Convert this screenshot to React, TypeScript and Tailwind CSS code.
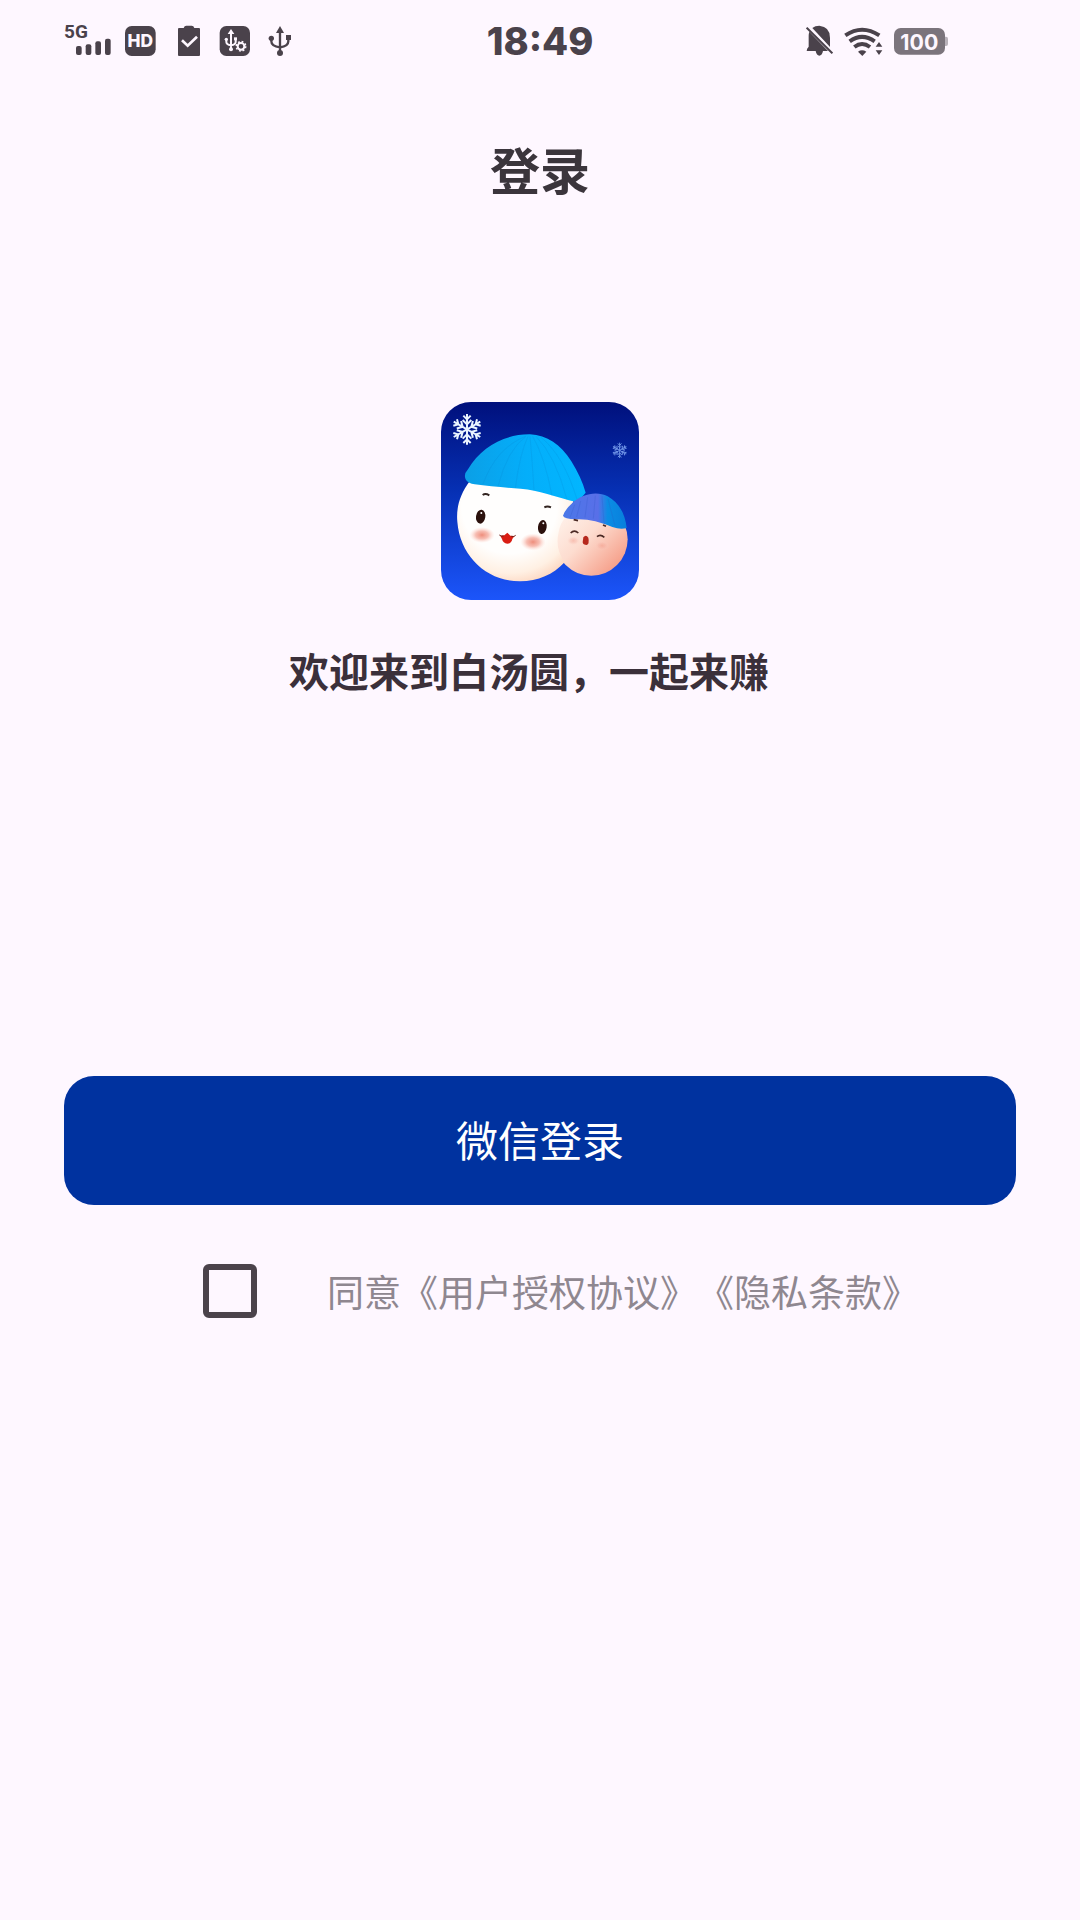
import { useState } from "react";

const cjk = "font-['Noto_Sans_CJK_SC',sans-serif] [text-spacing-trim:space-all]";

function SignalIcon() {
  return (
    <svg viewBox="42 27 141 126" className="h-[42px] w-[47px]" fill="currentColor" aria-label="5G">
      <text x="42" y="84" fontSize="57" fontWeight="700" fontFamily="Roboto, sans-serif">
        5G
      </text>
      <rect x="78" y="108" width="17" height="27" rx="6" />
      <rect x="107" y="103" width="17" height="32" rx="6" />
      <rect x="136" y="94" width="17" height="41" rx="6" />
      <rect x="165" y="86" width="17" height="49" rx="6" />
    </svg>
  );
}

function HdIcon() {
  return (
    <svg viewBox="219 36 105 108" className="h-9 w-[35px]" fill="currentColor" aria-label="HD">
      <rect x="225" y="48" width="92" height="90" rx="20" />
      <text
        x="271"
        y="112"
        textAnchor="middle"
        fontSize="52"
        fontWeight="800"
        fontFamily="Inter, sans-serif"
        fill="#fef7ff"
      >
        HD
      </text>
    </svg>
  );
}

function ClipboardIcon() {
  return (
    <svg viewBox="360 36 108 108" className="h-9 w-9" fill="currentColor" aria-hidden="true">
      <path d="M387 54h14q2-7 8-7h16q6 0 8 7h14q3 0 3 3v78q0 3-3 3h-60q-3 0-3-3V57q0-3 3-3z" />
      <path d="M396 91l17 16 28-27" fill="none" stroke="#fef7ff" strokeWidth="8" />
    </svg>
  );
}

function UsbGearIcon() {
  return (
    <svg viewBox="504 36 102 108" className="h-9 w-[34px]" fill="currentColor" aria-hidden="true">
      <rect x="509" y="48" width="91" height="90" rx="20" />
      <g fill="#fef7ff">
        <path d="M543 57l10 15h-20z" />
        <circle cx="543" cy="118" r="6" />
        <circle cx="529" cy="88" r="5" />
        <path d="M552 82h9v9h-9z" />
      </g>
      <path d="M543 68v48M529 88v8q0 8 14 10M557 88v8q0 8-14 10" fill="none" stroke="#fef7ff" strokeWidth="6" />
      <circle cx="573" cy="109" r="16" />
      <circle cx="573" cy="109" r="10" fill="none" stroke="#fef7ff" strokeWidth="6" />
      <circle cx="573" cy="109" r="14" fill="none" stroke="#fef7ff" strokeWidth="5" strokeDasharray="5.5 5.5" />
    </svg>
  );
}

function UsbIcon() {
  return (
    <svg viewBox="642 36 90 108" className="h-9 w-[30px]" fill="currentColor" aria-hidden="true">
      <path d="M690 48l12 21h-24z" />
      <circle cx="690" cy="129" r="9" />
      <circle cx="664" cy="85" r="8" />
      <path d="M708 75h15v15h-15z" />
      <path d="M690 64v62M664 86v8q0 15 26 18 25-3 25-18v-8" fill="none" stroke="currentColor" strokeWidth="7" />
    </svg>
  );
}

function BellOffIcon() {
  return (
    <svg viewBox="1008 36 81 108" className="h-9 w-[27px]" fill="currentColor" aria-hidden="true">
      <path d="M1027 54q8-7 21-7 32 3 32 36v28z" />
      <path d="M1018 65l56 58h-15q-3 14-11 14t-11-14h-27q0-8 6-13V78q0-7 2-13z" />
      <path d="M1013 47l77 80" stroke="#fef7ff" strokeWidth="5" />
      <path d="M1010 53l77 77" stroke="currentColor" strokeWidth="6" />
    </svg>
  );
}

function WifiIcon() {
  return (
    <svg viewBox="1122 36 117 108" className="h-9 w-[39px]" fill="currentColor" aria-hidden="true">
      <g fill="none" stroke="currentColor" strokeWidth="12">
        <path d="M1126 76q50-34 102 0" />
        <path d="M1139 94q37-27 75 0" />
        <path d="M1153 111q23-18 47 0" />
      </g>
      <path d="M1164 125q12-8 25 0l-12 13z" />
      <path d="M1227 96l10 14h-20zM1227 135l10-14h-20z" />
    </svg>
  );
}

function BatteryIcon() {
  return (
    <svg viewBox="1272 36 162 108" className="h-9 w-[54px]" aria-label="100">
      <path d="M1424 80h4q6 0 6 6v16q0 6-6 6h-4z" fill="#b9b2ba" />
      <rect x="1272" y="54" width="153" height="80" rx="20" fill="#7b747c" />
      <text
        x="1348"
        y="119"
        textAnchor="middle"
        fontSize="64"
        fontWeight="700"
        fontFamily="Inter, sans-serif"
        fill="#fef7ff"
      >
        100
      </text>
    </svg>
  );
}

function StatusBar() {
  return (
    <div className="grid h-20 grid-cols-3 items-center px-16 text-[#4a424b]">
      <div className="flex items-center gap-3">
        <SignalIcon />
        <HdIcon />
        <ClipboardIcon />
        <UsbGearIcon />
        <UsbIcon />
      </div>
      <time className="pt-0.5 text-center font-[Inter,sans-serif] text-[38px] leading-10 font-extrabold">18:49</time>
      <div className="flex items-center justify-end gap-[11px] pr-[68px]">
        <BellOffIcon />
        <WifiIcon />
        <BatteryIcon />
      </div>
    </div>
  );
}

const spokes = [0, 60, 120, 180, 240, 300];

function Snowflake() {
  return (
    <g fill="none" stroke="currentColor" strokeWidth="6">
      {spokes.map((deg) => (
        <path key={deg} transform={`rotate(${deg})`} d="M0 0v-46M-11-41l11 11 11-11M-13-28l13 13 13-13" />
      ))}
    </g>
  );
}

function AppLogo() {
  return (
    <svg viewBox="37 37 594 594" className="size-[198px] rounded-[30px]" role="img" aria-label="白汤圆">
      <defs>
        <linearGradient id="sky" x1="0" y1="0" x2="0" y2="1">
          <stop offset="0" stopColor="#00107c" />
          <stop offset="0.45" stopColor="#0630b4" />
          <stop offset="1" stopColor="#1c55fa" />
        </linearGradient>
        <radialGradient id="bigFace" cx="0.45" cy="0.35" r="0.68">
          <stop offset="0.6" stopColor="#fffefd" />
          <stop offset="0.85" stopColor="#fff0e3" />
          <stop offset="1" stopColor="#fdd9c4" />
        </radialGradient>
        <linearGradient id="smallFace" x1="0" y1="0.2" x2="0.8" y2="1">
          <stop offset="0" stopColor="#fff3ec" />
          <stop offset="0.45" stopColor="#fddccf" />
          <stop offset="1" stopColor="#f59a84" />
        </linearGradient>
        <radialGradient id="blush">
          <stop offset="0" stopColor="#ee8d7b" />
          <stop offset="0.5" stopColor="#f5ada0" stopOpacity="0.8" />
          <stop offset="1" stopColor="#ffd9cf" stopOpacity="0" />
        </radialGradient>
        <linearGradient id="bigHat" x1="0" y1="0" x2="1" y2="0">
          <stop offset="0" stopColor="#0b9fe6" />
          <stop offset="0.5" stopColor="#04aefa" />
          <stop offset="1" stopColor="#02b6ff" />
        </linearGradient>
        <linearGradient id="smallHat" x1="0" y1="0" x2="1" y2="0">
          <stop offset="0" stopColor="#4a78e8" />
          <stop offset="0.55" stopColor="#596fe8" />
          <stop offset="0.7" stopColor="#0b8ce4" />
          <stop offset="1" stopColor="#087fdc" />
        </linearGradient>
      </defs>
      <rect x="37" y="37" width="594" height="594" fill="url(#sky)" />
      <g transform="translate(115 119)" className="text-[#e9f4ff]">
        <Snowflake />
      </g>
      <g transform="translate(573 182) scale(0.5)" className="text-[#6f93e6]">
        <Snowflake />
      </g>

      <circle cx="488" cy="449" r="109" fill="url(#smallFace)" />
      <path
        d="M123 275C94 314 82 354 86 396c8 103 88 179 188 179 55 0 99-20 134-57q-30-42-18-90 4-28 24-48l20-44V290L200 230z"
        fill="url(#bigFace)"
      />

      {/* big dumpling */}
      <path
        d="M112 271q-9-16 6-32C157 171 229 133 304 134c51 2 92 31 124 81 20 32 34 63 43 94l-25 29C376 320 332 302 276 297q-78-5-138-13-19-3-26-13z"
        fill="url(#bigHat)"
      />
      <g fill="none" stroke="#0b83cf" strokeWidth="3" opacity="0.2">
        <path d="M290 140q-88 36-127 143M292 140q-56 40-84 150M298 140q-24 50-38 155M304 140q6 66 12 163M312 140q36 62 58 178M322 140q58 58 93 190M336 142q68 54 109 187" />
      </g>
      <path d="M162 316q8-6 20 1M347 353q9-5 20 0" fill="none" stroke="#332521" strokeWidth="6" />
      <ellipse cx="156" cy="381" rx="14" ry="21" fill="#2b110d" transform="rotate(8 156 381)" />
      <ellipse cx="341" cy="412" rx="13" ry="21" fill="#2b110d" transform="rotate(8 341 412)" />
      <circle cx="158" cy="370" r="3" fill="#fff" />
      <circle cx="344" cy="401" r="3" fill="#fff" />
      <ellipse cx="160" cy="436" rx="38" ry="24" fill="url(#blush)" />
      <ellipse cx="313" cy="457" rx="38" ry="26" fill="url(#blush)" />
      <path d="M215 438l12-1 9-8 9 9 12 1-6 9q-3 14-15 14-13-1-16-14z" fill="#d91d13" />
      <path d="M212 436q5 5 13 3M248 440q8 3 13-3" fill="none" stroke="#712017" strokeWidth="3" />

      {/* small dumpling */}
      <path
        d="M403 378q5-17 28-38c29-28 74-37 106-20 32 18 53 51 57 95q-19 5-43-3c-39-16-74-25-109-23q-36-1-39-11z"
        fill="url(#smallHat)"
      />
      <path
        d="M438 345l-14 39M456 334l-12 48M477 323l-8 60M500 318l-6 69M520 319l6 80M538 328l21 80"
        fill="none"
        stroke="#2f58c9"
        strokeWidth="3"
        opacity="0.25"
      />
      <path
        d="M426 430q11-11 23 0M505 441q10-9 22 2M435 390l13 3M523 406l9 4"
        fill="none"
        stroke="#4a2924"
        strokeWidth="5"
      />
      <ellipse cx="434" cy="453" rx="20" ry="14" fill="url(#blush)" opacity="0.4" />
      <ellipse cx="520" cy="468" rx="22" ry="15" fill="url(#blush)" opacity="0.4" />
      <path d="M464 443q8-10 15 1 4 18-5 22-11 0-12-8z" fill="#b6281d" />
    </svg>
  );
}

export default function App() {
  const [agreed, setAgreed] = useState(false);

  return (
    <div className={`min-h-screen bg-[#fef7ff] ${cjk}`}>
      <StatusBar />
      <header className="flex h-44 items-center justify-center">
        <h1 className="text-[50px] leading-[60px] font-bold text-[#3b353c]">登录</h1>
      </header>

      <main className="flex flex-col items-center px-16 pt-[146px]">
        <AppLogo />
        <p className="mt-[46px] pr-[22px] text-[40px] leading-[48px] font-bold text-[#3b303a]">
          欢迎来到白汤圆，一起来赚
        </p>

        <button
          type="button"
          className="mt-[382px] h-[129px] w-full rounded-[30px] bg-[#00329f] pb-1 text-[42px] leading-[50px] text-white"
        >
          微信登录
        </button>

        <div className="mt-[59px] flex items-center pr-1">
          <input
            id="agree"
            type="checkbox"
            checked={agreed}
            onChange={(e) => setAgreed(e.target.checked)}
            className="mx-[46px] size-[54px] appearance-none rounded-md border-6 border-[#4b434b] checked:bg-[#4b434b]"
          />
          <label htmlFor="agree" className="ml-6 text-[37px] leading-[44px] text-[#8f8790]">
            同意《用户授权协议》《隐私条款》
          </label>
        </div>
      </main>
    </div>
  );
}
